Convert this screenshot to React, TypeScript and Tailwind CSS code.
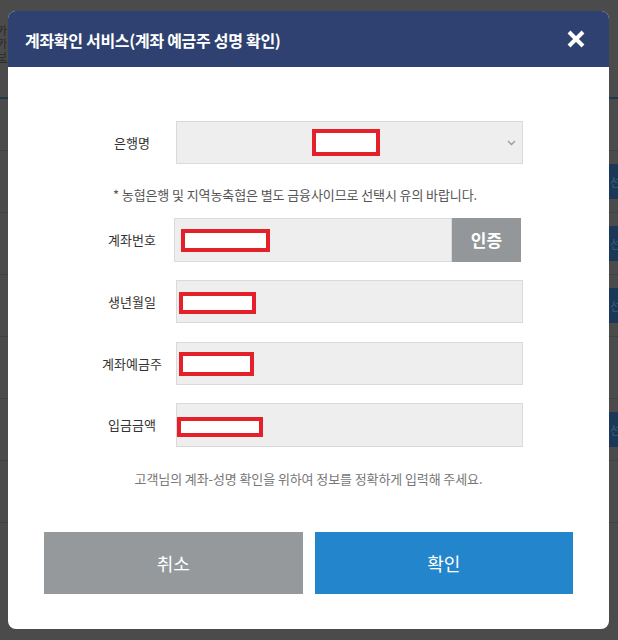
import React from "react";

const FONT = "font-['Noto_Sans_CJK_KR','Noto_Sans',sans-serif]";

function Redact({ w, h, className = "" }: { w: string; h: string; className?: string }) {
  return <span className={`block ${w} ${h} border-[4px] border-[#e4202a] bg-white ${className}`} />;
}

function Field({
  label,
  children,
  className = "",
}: {
  label: string;
  children: React.ReactNode;
  className?: string;
}) {
  return (
    <div className={`flex items-center h-[43px] ${className}`}>
      <div className="w-[88px] text-center text-[13px] text-[#333]">{label}</div>
      <div className="flex-1 h-full bg-[#eeeeee] border border-[#dadada] flex items-center">
        {children}
      </div>
    </div>
  );
}

function BackgroundPage() {
  const rows = [true, true, true, false, true, false, false];
  return (
    <div className="flex flex-col w-[618px]">
      <div className="h-[97px] pt-[24px] -ml-[3px] text-[11px] leading-[13px] text-[#2a2a2a]">
        <div>카</div>
        <div>카</div>
        <div className="underline">보</div>
      </div>
      <div className="h-[53px] border-t-2 border-[#1d3a47]" />
      {rows.map((btn, i) => (
        <div
          key={i}
          className="h-[62px] border-t border-[#414141] flex items-center justify-end"
        >
          {btn && (
            <div className="-mr-[40px] w-[49px] h-[35px] bg-[#1b3858] text-[12px] text-[#3f5d7b] flex items-center pl-[1px]">
              선택
            </div>
          )}
        </div>
      ))}
    </div>
  );
}

export default function App() {
  return (
    <div className={`relative w-[618px] h-[640px] overflow-hidden bg-[#4b4b4b] ${FONT}`}>
      <BackgroundPage />

      <div className="absolute inset-0 pl-[8px] pt-[11px]">
        <div className="w-[601px] h-[618px] rounded-[8px] bg-white overflow-hidden flex flex-col">
          {/* header */}
          <div className="h-[56px] bg-[#2e4170] flex items-center justify-between pl-[17px] pr-[24px]">
            <h2 className="text-white font-bold text-[16px] tracking-[-0.3px] pt-[1px]">
              계좌확인 서비스(계좌 예금주 성명 확인)
            </h2>
            <svg width="18" height="18" viewBox="0 0 18 18" fill="none" className="text-white">
              <path d="M2 2L16 16M16 2L2 16" stroke="currentColor" strokeWidth="4" />
            </svg>
          </div>

          {/* body */}
          <div className="flex flex-col pt-[54px]">
            <div className="pl-[80px] w-[515px] flex flex-col">
              <Field label="은행명">
                <div className="flex-1 flex items-center pl-[135px]">
                  <Redact w="w-[68px]" h="h-[27px]" />
                </div>
                <svg width="9" height="6" viewBox="0 0 9 6" fill="none" className="mr-[6px] text-[#9a9a9a]">
                  <path d="M1 1L4.5 4.5L8 1" stroke="currentColor" strokeWidth="1.3" />
                </svg>
              </Field>

              <p className="mt-[22px] h-[18px] leading-[18px] pl-[25px] text-[13px] text-[#555] tracking-[-0.1px] whitespace-nowrap">
                * 농협은행 및 지역농축협은 별도 금융사이므로 선택시 유의 바랍니다.
              </p>

              <div className="mt-[14px] flex items-center h-[44px]">
                <div className="w-[86px] text-center text-[13px] text-[#333] pl-[2px]">
                  계좌번호
                </div>
                <div className="w-[278px] h-full bg-[#eeeeee] border border-[#dadada] flex items-center pl-[6px]">
                  <Redact w="w-[89px]" h="h-[23px]" />
                </div>
                <button className="w-[69px] h-full bg-[#939799] text-white font-bold text-[17px]">
                  인증
                </button>
              </div>

              <Field label="생년월일" className="mt-[18px]">
                <span className="pl-[2px] pt-[2px]">
                  <Redact w="w-[77px]" h="h-[22px]" />
                </span>
              </Field>

              <Field label="계좌예금주" className="mt-[19px]">
                <span className="pl-[2px] pt-[1px]">
                  <Redact w="w-[75px]" h="h-[24px]" />
                </span>
              </Field>

              <Field label="입금금액" className="mt-[18px] h-[44px]">
                <span className="pl-[0px] pt-[3px]">
                  <Redact w="w-[86px]" h="h-[20px]" />
                </span>
              </Field>
            </div>

            <p className="mt-[23px] h-[18px] leading-[18px] text-center text-[13px] text-[#777] tracking-[-0.1px] whitespace-nowrap">
              고객님의 계좌-성명 확인을 위하여 정보를 정확하게 입력해 주세요.
            </p>

            <div className="mt-[44px] px-[36px] grid grid-cols-2 gap-[12px]">
              <button className="h-[62px] bg-[#95999c] text-white text-[18px]">취소</button>
              <button className="h-[62px] bg-[#2386cc] text-white text-[18px]">확인</button>
            </div>
          </div>
        </div>
      </div>
    </div>
  );
}
